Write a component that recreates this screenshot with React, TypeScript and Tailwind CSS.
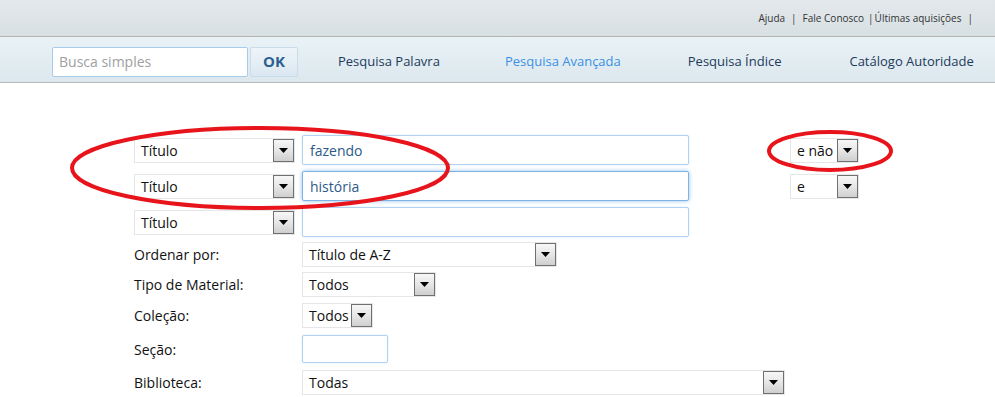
import React from "react";

const font = { fontFamily: '"Open Sans", "Noto Sans", sans-serif' };

function Arrow() {
  return (
    <div className="flex w-[21px] shrink-0 items-center justify-center border border-[#707070] bg-gradient-to-b from-[#f7f7f7] via-[#e6e6e6] to-[#cfcfcf]">
      <svg width="9" height="5" viewBox="0 0 9 5">
        <path d="M0 0h9L4.5 5z" fill="#000" />
      </svg>
    </div>
  );
}

function Select({ value, className }: { value: string; className: string }) {
  return (
    <div className={`flex h-[25px] items-stretch border border-[#e6e6e6] bg-white ${className}`}>
      <div className="flex flex-1 items-center pl-[6px] text-[14px] text-[#111]">{value}</div>
      <Arrow />
    </div>
  );
}

function TextBox({ value, focused, className }: { value?: string; focused?: boolean; className: string }) {
  return (
    <div
      className={`flex items-center rounded-[2px] border bg-white pl-[7px] text-[14px] text-[#2d5a89] ${
        focused
          ? "border-[#7eb3e3] shadow-[0_0_4px_#8fc0ec]"
          : "border-[#b3d2ef] shadow-[0_0_2px_#cfe3f5]"
      } ${className}`}
    >
      {value}
    </div>
  );
}

function Row({ label, className, children }: { label: string; className: string; children: React.ReactNode }) {
  return (
    <div className={`flex items-center ${className}`}>
      <div className="w-[168px] text-[14px] text-[#111]">{label}</div>
      {children}
    </div>
  );
}

export default function App() {
  return (
    <div className="relative h-[397px] w-[995px] overflow-hidden bg-white" style={font}>
      {/* Top strip */}
      <div className="flex h-[37px] items-center justify-end border-b border-[#b4b4b4] bg-gradient-to-b from-[#e3e8eb] to-[#d8e0e4] pr-[22px] pt-[1px] text-[10px] text-[#333]">
        <span>Ajuda</span>
        <span className="mx-[6px]">|</span>
        <span>Fale Conosco</span>
        <span className="ml-[4px] mr-[1px]">|</span>
        <span>Últimas aquisições</span>
        <span className="ml-[6px]">|</span>
      </div>

      {/* Nav */}
      <div className="flex h-[46px] items-center border-b border-[#b8b8b8] bg-gradient-to-b from-[#e8f2f7] to-[#dde8ee] pl-[52px] pt-[4px]">
        <div className="flex h-[30px] w-[196px] items-center rounded-[2px] border border-[#a9cbea] bg-white pl-[6px] text-[14px] text-[#a0a0a0]">
          Busca simples
        </div>
        <div className="ml-[2px] flex h-[30px] w-[48px] items-center justify-center rounded-[2px] border border-[#c8dceb] bg-gradient-to-b from-[#eef5fa] to-[#dbe8f1] text-[15px] font-bold text-[#2d5f8f]">
          OK
        </div>
        <div className="ml-[40px] text-[13px] text-[#1d3a5a]">Pesquisa Palavra</div>
        <div className="ml-[65px] text-[13px] text-[#3b90e4]">Pesquisa Avançada</div>
        <div className="ml-[67px] text-[13px] text-[#1d3a5a]">Pesquisa Índice</div>
        <div className="ml-[68px] text-[13px] text-[#1d3a5a]">Catálogo Autoridade</div>
      </div>

      {/* Form */}
      <div className="pl-[134px] pt-[52px]">
        <div className="flex flex-col gap-[6px]">
          <div className="flex items-center">
            <Select value="Título" className="w-[161px]" />
            <TextBox value="fazendo" className="ml-[7px] h-[30px] w-[387px]" />
            <Select value="e não" className="ml-[101px] w-[69px]" />
          </div>
          <div className="flex items-center">
            <Select value="Título" className="w-[161px]" />
            <TextBox value="história" focused className="ml-[7px] h-[30px] w-[387px]" />
            <Select value="e" className="ml-[101px] w-[69px]" />
          </div>
          <div className="flex items-center">
            <Select value="Título" className="w-[161px]" />
            <TextBox className="ml-[7px] h-[30px] w-[387px]" />
          </div>
        </div>

        <div className="mt-[5px] flex flex-col">
          <Row label="Ordenar por:" className="">
            <Select value="Título de A-Z" className="w-[255px]" />
          </Row>
          <Row label="Tipo de Material:" className="mt-[5px]">
            <Select value="Todos" className="w-[134px]" />
          </Row>
          <Row label="Coleção:" className="mt-[6px]">
            <Select value="Todos" className="w-[71px]" />
          </Row>
          <Row label="Seção:" className="mt-[7px]">
            <TextBox className="h-[28px] w-[86px]" />
          </Row>
          <Row label="Biblioteca:" className="mt-[7px]">
            <Select value="Todas" className="w-[483px]" />
          </Row>
        </div>
      </div>

      {/* Red annotation marks */}
      <svg className="pointer-events-none absolute left-0 top-0" width="995" height="397" viewBox="0 0 995 397">
        <ellipse cx="260" cy="168" rx="188" ry="40" fill="none" stroke="#e8141c" strokeWidth="4" />
        <ellipse cx="830" cy="151" rx="61" ry="19" fill="none" stroke="#e8141c" strokeWidth="4" />
      </svg>
    </div>
  );
}
